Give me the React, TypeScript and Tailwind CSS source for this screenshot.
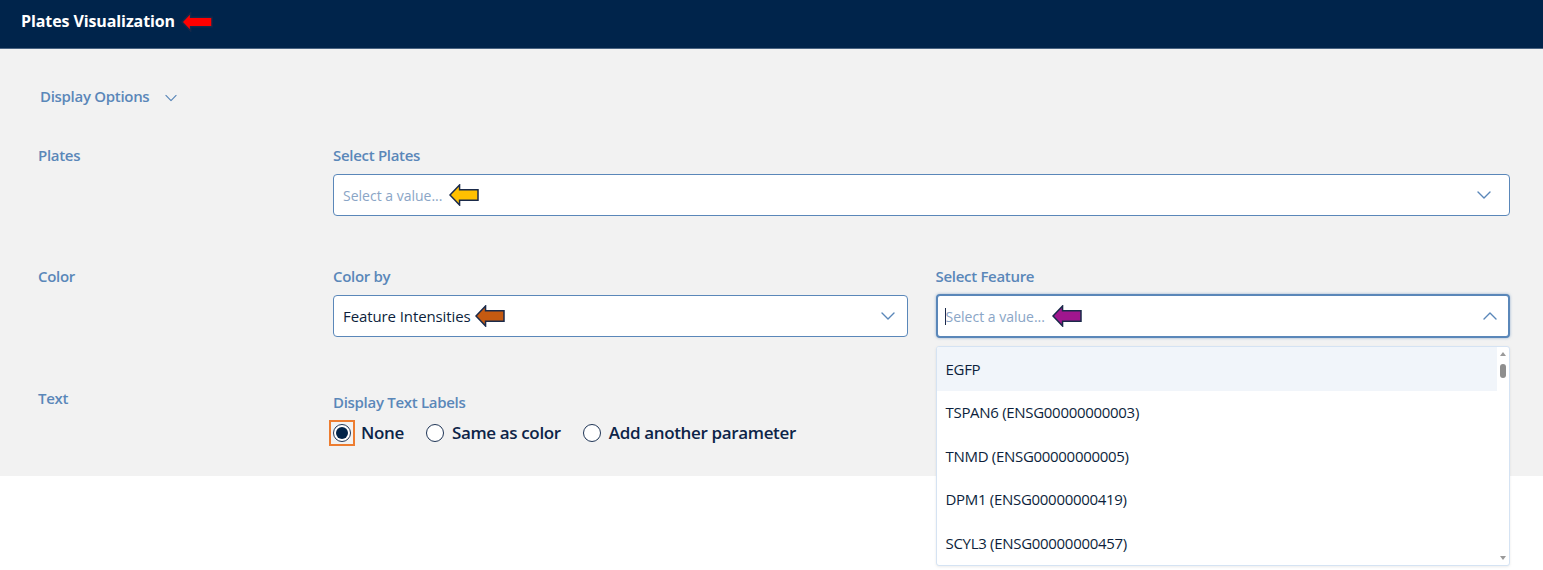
import React from "react";

const font = { fontFamily: '"Open Sans", "Noto Sans", sans-serif' };

function Chevron({ up = false, className = "" }: { up?: boolean; className?: string }) {
  return (
    <svg width="14" height="8" viewBox="0 0 14 8" className={className}>
      <path
        d={up ? "M1 7 L7 1 L13 7" : "M1 1 L7 7 L13 1"}
        fill="none"
        stroke="#5a87b9"
        strokeWidth="1.4"
        strokeLinecap="round"
        strokeLinejoin="round"
      />
    </svg>
  );
}

function Arrow({ fill, w = 30, h = 22, stroke = "#1a2a4a" }: { fill: string; w?: number; h?: number; stroke?: string }) {
  const m = h / 2;
  const head = h * 0.48;
  const t = h * 0.26;
  return (
    <svg width={w} height={h} viewBox={`0 0 ${w} ${h}`} className="shrink-0">
      <polygon
        points={`1,${m} ${head},1 ${head},${t} ${w - 1},${t} ${w - 1},${h - t} ${head},${h - t} ${head},${h - 1}`}
        fill={fill}
        stroke={stroke}
        strokeWidth="1.5"
        strokeLinejoin="miter"
      />
    </svg>
  );
}

function Radio({ checked }: { checked?: boolean }) {
  return (
    <span className="flex h-[18px] w-[18px] items-center justify-center rounded-full border-[1.5px] border-[#1f3556] bg-white">
      {checked && <span className="h-[12px] w-[12px] rounded-full bg-[#002349]" />}
    </span>
  );
}

const items = [
  "EGFP",
  "TSPAN6 (ENSG00000000003)",
  "TNMD (ENSG00000000005)",
  "DPM1 (ENSG00000000419)",
  "SCYL3 (ENSG00000000457)",
];

const label = "text-[15px] font-semibold leading-[20px] tracking-[-0.3px] text-[#5a87b9]";
const radioText = "text-[17px] font-semibold tracking-[-0.35px] text-[#0d2448]";

export default function App() {
  return (
    <div className="min-h-[570px] bg-white text-[#002349]" style={font}>
      <header className="flex h-[49px] items-center border-b border-[#4a6482] bg-[#00244b] pb-[6px] pl-[21px]">
        <span className="text-[16px] font-bold tracking-[-0.1px] text-white">Plates Visualization</span>
        <span className="ml-[6px] mt-[1px]">
          <Arrow fill="#ff0000" w={32} h={20} stroke="#15294a" />
        </span>
      </header>

      <section className="h-[427px] bg-[#f2f2f2] pl-[38px] pr-[33px] pt-[37px]">
        <div className="flex h-[20px] items-center pl-[2px]">
          <span className={label}>Display Options</span>
          <Chevron className="ml-[15px] mt-[3px] scale-[0.85]" />
        </div>

        {/* Plates row */}
        <div className="mt-[39px] grid grid-cols-[295px_1fr]">
          <div className={label}>Plates</div>
          <div>
            <div className={label}>Select Plates</div>
            <div className="mt-[9px] flex h-[42px] items-center justify-between rounded-[4px] border border-[#5a87b9] bg-white pl-[9px] pr-[18px]">
              <div className="flex items-center">
                <span className="text-[14px] tracking-[0px] text-[#8aa5c6]">Select a value...</span>
                <span className="ml-[7px]">
                  <Arrow fill="#ffc000" w={30} h={22} />
                </span>
              </div>
              <Chevron />
            </div>
          </div>
        </div>

        {/* Color row */}
        <div className="mt-[50px] grid grid-cols-[295px_1fr]">
          <div className={label}>Color</div>
          <div className="grid grid-cols-2 gap-[28px]">
            <div>
              <div className={label}>Color by</div>
              <div className="mt-[9px] flex h-[42px] items-center justify-between rounded-[4px] border border-[#5a87b9] bg-white pl-[9px] pr-[12px]">
                <div className="flex items-center">
                  <span className="text-[15px] tracking-[-0.1px] text-[#0d1f3c]">Feature Intensities</span>
                  <span className="ml-[4px]">
                    <Arrow fill="#c55a11" w={30} h={22} />
                  </span>
                </div>
                <Chevron />
              </div>
            </div>
            <div className="relative">
              <div className={label}>Select Feature</div>
              <div className="mt-[8px] flex h-[44px] items-center justify-between rounded-[4px] border-2 border-[#5a87b9] bg-white pl-[7px] pr-[11px] shadow-[0_0_3px_rgba(90,135,185,0.6)]">
                <div className="flex items-center">
                  <span className="h-[17px] w-px bg-[#1a2a4a]" />
                  <span className="text-[14px] tracking-[0px] text-[#8aa5c6]">Select a value...</span>
                  <span className="ml-[7px]">
                    <Arrow fill="#a0168e" w={30} h={22} />
                  </span>
                </div>
                <Chevron up />
              </div>

              {/* Dropdown menu */}
              <div className="absolute left-0 right-0 top-[80px] z-10 flex h-[220px] overflow-hidden rounded-[3px] border border-[#d5e3f3] bg-white shadow-[0_1px_3px_rgba(0,0,0,0.08)]">
                <div className="flex-1">
                  {items.map((it, i) => (
                    <div
                      key={it}
                      className={`flex h-[43.5px] items-center pl-[9px] text-[15px] tracking-[-0.3px] text-[#0d1f3c] ${
                        i === 0 ? "bg-[#f1f5fa]" : ""
                      }`}
                    >
                      {it}
                    </div>
                  ))}
                </div>
                <div className="flex w-[12px] flex-col items-center justify-between py-[5px]">
                  <div className="flex flex-col items-center">
                    <span className="h-0 w-0 border-x-[3px] border-b-[4px] border-x-transparent border-b-[#9a9a9a]" />
                    <span className="mt-[8px] h-[14px] w-[6px] rounded-[3px] bg-[#8e8e8e]" />
                  </div>
                  <span className="h-0 w-0 border-x-[3px] border-t-[4px] border-x-transparent border-t-[#9a9a9a]" />
                </div>
              </div>
            </div>
          </div>
        </div>

        {/* Text row */}
        <div className="mt-[50px] grid grid-cols-[295px_1fr]">
          <div className={label}>Text</div>
          <div className="pt-[4px]">
            <div className={label}>Display Text Labels</div>
            <div className="mt-[8px] flex items-center">
              <span className="-ml-[4px] flex h-[26px] w-[26px] items-center justify-center border-2 border-[#ed7d31]">
                <Radio checked />
              </span>
              <span className={`ml-[6px] ${radioText}`}>None</span>
              <span className="ml-[22px]">
                <Radio />
              </span>
              <span className={`ml-[8px] ${radioText}`}>Same as color</span>
              <span className="ml-[22px]">
                <Radio />
              </span>
              <span className={`ml-[8px] ${radioText}`}>Add another parameter</span>
            </div>
          </div>
        </div>
      </section>
    </div>
  );
}
